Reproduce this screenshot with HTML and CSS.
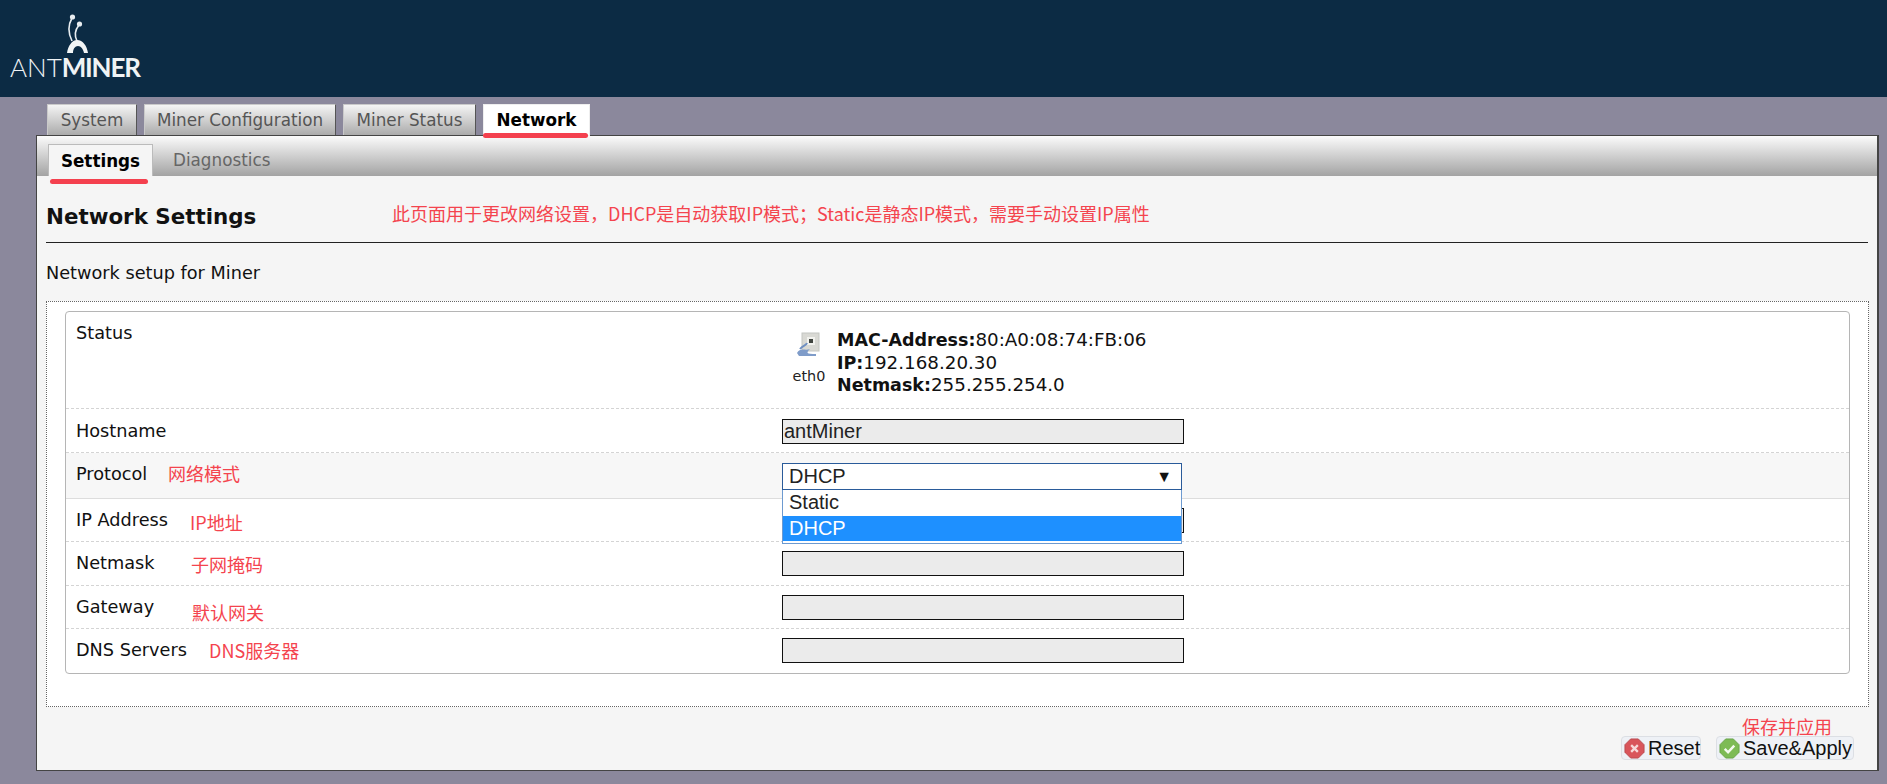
FILE: index.html
```html
<!DOCTYPE html>
<html lang="en">
<head>
<meta charset="utf-8">
<title>Antminer Network</title>
<link rel="stylesheet" href="styles.css">
</head>
<body>
<header class="top">
  <div class="logo">
    <svg class="ant" width="24" height="42" viewBox="0 0 24 42">
      <path d="M6 28 C2 20 2 12 6 5" fill="none" stroke="#e8edf0" stroke-width="1.6"/>
      <path d="M11 28 C8 22 9 17 13 12" fill="none" stroke="#e8edf0" stroke-width="1.6"/>
      <circle cx="6.5" cy="4" r="2.6" fill="#e8edf0"/>
      <circle cx="13.5" cy="11" r="2.6" fill="#e8edf0"/>
      <path d="M1 40 C2 33 6 27 11 27 C17 27 21 33 22 40 L18 40 C17 36 15 33 12 33 C9 33 7 36 7 40 Z" fill="#f2f5f6"/>
    </svg>
    <div class="wordmark"><span class="wm-light">ANT</span><span class="wm-bold">MINER</span></div>
  </div>
</header>
<main class="page">
  <nav class="tabs">
    <a class="tab tab-system">System</a>
    <a class="tab tab-config">Miner Configuration</a>
    <a class="tab tab-status">Miner Status</a>
    <a class="tab tab-active tab-network">Network<i class="mark mark-network"></i></a>
  </nav>
  <section class="panel">
    <nav class="subtabs">
      <a class="subtab subtab-active">Settings<i class="mark mark-settings"></i></a>
      <a class="subtab">Diagnostics</a>
    </nav>
    <div class="content">
      <div class="title-row">
        <h2 class="title">Network Settings</h2>
        <span class="note note-title">此页面用于更改网络设置，DHCP是自动获取IP模式；Static是静态IP模式，需要手动设置IP属性</span>
      </div>
      <p class="desc">Network setup for Miner</p>
      <div class="fieldset">
        <div class="table">
          <div class="row row-status">
            <div class="label">Status</div>
            <div class="field status">
              <div class="iface">
                <svg width="24" height="24" viewBox="0 0 24 24">
                  <rect x="6" y="1" width="17" height="18" fill="#d9d9d4" stroke="#c4c6c2"/>
                  <rect x="11" y="5" width="8" height="8" fill="#f2f2ee"/>
                  <rect x="13" y="7" width="4" height="4" fill="#40443f"/>
                  <path d="M1 21 C4 15 9 19 14 17 C10 21 10 22 20 22 L20 24 L3 24 Z" fill="#7f9cc9"/>
                  <path d="M4 17 C7 13 10 14 11 11" fill="none" stroke="#6f8fc2" stroke-width="2"/>
                </svg>
                <span class="iface-name">eth0</span>
              </div>
              <div class="info">
                <div><b>MAC-Address:</b>80:A0:08:74:FB:06</div>
                <div><b>IP:</b>192.168.20.30</div>
                <div><b>Netmask:</b>255.255.254.0</div>
              </div>
            </div>
          </div>
          <div class="row row-host">
            <div class="label">Hostname</div>
            <div class="field"><input class="input" value="antMiner" readonly></div>
          </div>
          <div class="row row-proto">
            <div class="label">Protocol</div>
            <span class="note note-proto">网络模式</span>
            <div class="field select-wrap">
              <div class="select">DHCP<span class="caret">▼</span></div>
              <ul class="menu">
                <li class="option">Static</li>
                <li class="option option-on">DHCP</li>
              </ul>
            </div>
          </div>
          <div class="row row-ip">
            <div class="label">IP Address</div>
            <span class="note note-ip">IP地址</span>
            <div class="field"><input class="input" readonly></div>
          </div>
          <div class="row row-mask">
            <div class="label">Netmask</div>
            <span class="note note-mask">子网掩码</span>
            <div class="field"><input class="input" readonly></div>
          </div>
          <div class="row row-gw">
            <div class="label">Gateway</div>
            <span class="note note-gw">默认网关</span>
            <div class="field"><input class="input" readonly></div>
          </div>
          <div class="row row-dns">
            <div class="label">DNS Servers</div>
            <span class="note note-dns">DNS服务器</span>
            <div class="field"><input class="input" readonly></div>
          </div>
        </div>
      </div>
      <div class="actions">
        <span class="note note-save">保存并应用</span>
        <button class="btn btn-reset">
          <svg class="btn-icon" width="21" height="21" viewBox="0 0 22 22">
            <path d="M7 1 H15 L21 7 V15 L15 21 H7 L1 15 V7 Z" fill="#d9555b" stroke="#b94a50"/>
            <path d="M7.5 7.5 L14.5 14.5 M14.5 7.5 L7.5 14.5" stroke="#f7d9da" stroke-width="2.4"/>
          </svg>Reset</button>
        <button class="btn btn-save">
          <svg class="btn-icon" width="21" height="21" viewBox="0 0 22 22">
            <path d="M7 1 H15 L21 7 V15 L15 21 H7 L1 15 V7 Z" fill="#7dbb55" stroke="#69a548"/>
            <path d="M6 11.5 L9.5 15 L16 8" fill="none" stroke="#f4faf0" stroke-width="2.6"/>
          </svg>Save&amp;Apply</button>
      </div>
    </div>
  </section>
</main>
</body>
</html>
```

FILE: styles.css
```css
* { box-sizing: border-box; }
html, body { margin: 0; height: 100%; }
body {
  background: #8b889c;
  font-family: "DejaVu Sans", Verdana, sans-serif;
  font-size: 16.8px;
  color: #111;
  overflow: hidden;
}
.top {
  height: 97px;
  background: #0c2b44;
  position: relative;
  padding: 13px 0 0 10px;
}
.logo { width: 130px; position: relative; }
.ant { display: block; margin-left: 56px; }
.wordmark {
  font-family: Lato, "Open Sans", sans-serif;
  font-size: 26px;
  line-height: 24px;
  color: #f0f3f5;
  white-space: nowrap;
}
.wm-light { font-weight: 300; }
.wm-bold { font-weight: 700; letter-spacing: -1.2px; }

.page { padding: 7px 8px 0 36px; }
.tabs { display: flex; gap: 7px; padding-left: 11px; height: 32px; }
.tab {
  position: relative;
  display: block;
  height: 32px;
  line-height: 31px;
  text-align: center;
  color: #555;
  background: linear-gradient(#f4f4f4, #ababab);
  border: 1px solid #666;
  border-color: #c9c9c9 #555 #555 #c9c9c9;
}
.tab-system { width: 90px; }
.tab-config { width: 192px; }
.tab-status { width: 133px; }
.tab-network { width: 107px; }
.tab-active {
  background: #fff;
  color: #000;
  font-weight: 700;
  border-color: #eee;
  z-index: 2;
}
.mark {
  position: absolute;
  display: block;
  height: 5px;
  background: #f4404e;
  border-radius: 3px;
}
.mark-network { left: -1px; right: 1px; top: 28px; }
.mark-settings { left: 1px; width: 98px; top: 34px; }

.panel {
  height: 636px;
  margin-top: -1px;
  background: #f5f5f5;
  border: 1px solid #444;
  border-right-width: 2px;
  position: relative;
}
.subtabs {
  height: 40px;
  display: flex;
  padding: 8px 0 0 11px;
  gap: 20px;
  background: linear-gradient(#fbfbfb, #a3a3a3);
}
.subtab {
  position: relative;
  height: 32px;
  line-height: 32px;
  color: #666;
}
.subtab-active {
  width: 105px;
  text-align: center;
  color: #000;
  font-weight: 700;
  background: #f5f5f5;
  border: 1px solid #bbb;
  border-bottom: 0;
}
.content { padding: 0 9px 0 9px; position: relative; }
.title-row {
  display: flex;
  align-items: center;
  height: 67px;
  border-bottom: 1px solid #222;
}
.title {
  margin: 0;
  font-size: 21.4px;
  font-weight: 700;
  white-space: nowrap;
  color: #111;
  width: 346px;
  padding-top: 14px;
}
.note {
  font-family: "Noto Sans CJK SC", "Liberation Sans", sans-serif;
  font-size: 18px;
  line-height: 24px;
  color: #f4444e;
  white-space: nowrap;
}
.note-title { padding-top: 8px; margin-right: -20px; }
.desc {
  margin: 0;
  height: 58px;
  padding: 19px 0 0 0;
  line-height: 22px;
  font-size: 17.7px;
}
.fieldset {
  height: 406px;
  width: 1823px;
  background: #fff;
  border: 1px dotted #666;
  padding: 9px 18px 0 18px;
}
.table {
  background: #fff;
  border: 1px solid #b5b5b5;
  border-radius: 4px;
  height: 363px;
}
.row {
  position: relative;
  display: flex;
  padding-top: 9px;
  border-bottom: 1px dashed #d4d4d4;
}
.row-status { height: 97px; }
.row-host { height: 44px; }
.row-proto { height: 46px; background: #f7f7f7; border-bottom: 1px solid #ddd; }
.row-ip { height: 43px; }
.row-mask { height: 44px; }
.row-gw { height: 43px; }
.row-dns { height: 43px; border-bottom: 0; }
.label {
  width: 716px;
  padding: 1px 0 0 10px;
  line-height: 22px;
  font-size: 17.7px;
  flex: none;
}
.row-host .label { padding-top: 2px; }
.field { flex: none; }
.input {
  display: block;
  width: 402px;
  height: 25px;
  border: 1px solid #111;
  background: #ebebeb;
  font-family: "Liberation Sans", Arial, sans-serif;
  font-size: 20px;
  padding: 0 1px;
  color: #222;
  outline: 0;
  border-radius: 0;
}
.row-host .input { margin-top: 1px; }
.status { display: flex; padding: 8px 0 0 2px; }
.iface {
  width: 50px;
  margin-right: 3px;
  display: flex;
  flex-direction: column;
  align-items: center;
}
.iface svg { margin: 3px 0 0 -2px; }
.iface-name {
  font-size: 14.4px;
  line-height: 20px;
  margin-top: 10px;
  color: #222;
}
.info { line-height: 22.5px; font-size: 18.3px; }
.info b { font-size: 17.5px; }
.select-wrap { position: relative; }
.select {
  position: relative;
  width: 400px;
  height: 27px;
  margin-top: 1px;
  background: #fff;
  border: 1px solid #2a5b9a;
  font-family: "Liberation Sans", Arial, sans-serif;
  font-size: 20px;
  line-height: 25px;
  padding-left: 6px;
  color: #222;
}
.caret {
  position: absolute;
  right: 9px;
  top: 0;
  font-size: 16px;
  color: #111;
}
.menu {
  position: absolute;
  z-index: 5;
  left: 0;
  top: 28px;
  width: 400px;
  margin: 0;
  padding: 0 0 2px;
  list-style: none;
  background: #fff;
  border: 1px solid #6d9ad0;
  border-top: 0;
  font-family: "Liberation Sans", Arial, sans-serif;
  font-size: 20px;
}
.option { height: 26px; line-height: 24px; padding-left: 6px; color: #222; }
.option-on { height: 25px; background: #1e90ff; color: #fff; }
.note-proto, .note-ip, .note-mask, .note-gw, .note-dns { position: absolute; }
.note-proto { left: 102px; top: 8px; }
.note-ip { left: 124px; top: 11px; }
.note-mask { left: 125px; top: 10px; }
.note-gw { left: 126px; top: 14px; }
.note-dns { left: 143px; top: 9px; }
.actions {
  position: relative;
  display: flex;
  justify-content: flex-end;
  gap: 15px;
  padding: 29px 14px 0 0;
}
.note-save { position: absolute; right: 36px; top: 7px; }
.btn {
  display: flex;
  align-items: center;
  gap: 3px;
  height: 24px;
  padding: 0 2px 0 2px;
  border: 1px solid #dcdfe4;
  border-radius: 4px;
  background: #eef1f6;
  font-family: "Liberation Sans", Arial, sans-serif;
  font-size: 20px;
  color: #111;
}
.btn-icon { flex: none; }
.btn-reset { width: 80px; }
.btn-save { width: 138px; }
```
